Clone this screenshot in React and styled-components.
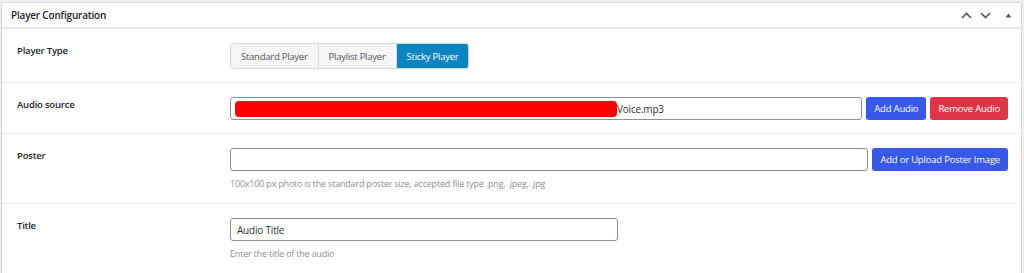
import React from "react";
import styled, { createGlobalStyle } from "styled-components";

const GlobalStyle = createGlobalStyle`
  body {
    margin: 0;
    background: #f0f0f1;
    font-family: "Open Sans", "Noto Sans", sans-serif;
    color: #1d2327;
  }
`;

const App = () => {
  return (
    <>
      <GlobalStyle />
      <Page>
        <Panel>
          <Header>
            <HeaderTitle>Player Configuration</HeaderTitle>
            <HeaderActions>
              <IconButton aria-label="Move up">
                <svg width="11" height="7" viewBox="0 0 11 7">
                  <path d="M1 6 L5.5 1.5 L10 6" fill="none" stroke="#50575e" strokeWidth="1.6" />
                </svg>
              </IconButton>
              <IconButton aria-label="Move down">
                <svg width="11" height="7" viewBox="0 0 11 7">
                  <path d="M1 1 L5.5 5.5 L10 1" fill="none" stroke="#50575e" strokeWidth="1.6" />
                </svg>
              </IconButton>
              <IconButton aria-label="Toggle panel" $gap="6px">
                <svg width="7" height="5" viewBox="0 0 7 5">
                  <path d="M0.5 4.5 L3.5 0.5 L6.5 4.5 Z" fill="#50575e" />
                </svg>
              </IconButton>
            </HeaderActions>
          </Header>

          <Row>
            <Label>Player Type</Label>
            <Field>
              <Segmented>
                <Segment>Standard Player</Segment>
                <Segment>Playlist Player</Segment>
                <Segment $active>Sticky Player</Segment>
              </Segmented>
            </Field>
          </Row>

          <Row>
            <Label>Audio source</Label>
            <Field>
              <InputLine>
                <FakeInput>
                  <Redacted />
                  <span>Voice.mp3</span>
                </FakeInput>
                <ActionButton $color="#3858e9">Add Audio</ActionButton>
                <ActionButton $color="#dc3545">Remove Audio</ActionButton>
              </InputLine>
            </Field>
          </Row>

          <Row>
            <Label>Poster</Label>
            <Field>
              <InputLine>
                <TextInput type="text" defaultValue="" />
                <ActionButton $color="#3858e9">Add or Upload Poster Image</ActionButton>
              </InputLine>
              <Help>100x100 px photo is the standard poster size, accepted file type .png, .jpeg, .jpg</Help>
            </Field>
          </Row>

          <Row $last>
            <Label>Title</Label>
            <Field>
              <TextInput type="text" defaultValue="Audio Title" $width="388px" />
              <Help>Enter the title of the audio</Help>
            </Field>
          </Row>
        </Panel>
      </Page>
    </>
  );
};

const Page = styled.div`
  padding: 2px 2px 0 1px;
  height: 271px;
  overflow: hidden;
`;

const Panel = styled.div`
  background: #fff;
  border: 1px solid #d6d7d9;
  border-bottom: none;
  height: 100%;
  letter-spacing: -0.2px;
`;

const Header = styled.div`
  display: flex;
  align-items: center;
  justify-content: space-between;
  height: 24px;
  padding: 0 9px 0 9px;
  border-bottom: 2px solid #e6e6e6;
`;

const HeaderTitle = styled.h2`
  margin: 0;
  font-size: 10px;
  font-weight: 600;
  color: #1d2327;
`;

const HeaderActions = styled.div`
  display: flex;
  align-items: center;
  gap: 8px;
`;

const IconButton = styled.button`
  display: flex;
  align-items: center;
  justify-content: center;
  padding: 0;
  border: none;
  background: none;
  margin-left: ${(p) => p.$gap || "0"};
`;

const Row = styled.div`
  display: flex;
  align-items: flex-start;
  padding: 14px 13px ${(p) => (p.$last ? "20px" : "13px")} 15px;
  border-bottom: ${(p) => (p.$last ? "none" : "1px solid #ededed")};
`;

const Label = styled.div`
  width: 213px;
  flex-shrink: 0;
  padding-top: 1px;
  font-size: 9.5px;
  font-weight: 600;
  color: #1d2327;
`;

const Field = styled.div`
  flex: 1;
  display: flex;
  flex-direction: column;
  align-items: flex-start;
`;

const Segmented = styled.div`
  display: flex;
  border: 1px solid #d4d4d4;
  border-radius: 3px;
  overflow: hidden;
  height: 24px;
`;

const Segment = styled.button`
  height: 100%;
  padding: 0 10px;
  border: none;
  border-left: 1px solid #dcdcdc;
  font-family: inherit;
  font-size: 9.5px;
  letter-spacing: -0.25px;
  background: ${(p) => (p.$active ? "#0b85bf" : "#f5f5f5")};
  color: ${(p) => (p.$active ? "#fff" : "#50575e")};
  &:first-child {
    border-left: none;
  }
`;

const InputLine = styled.div`
  display: flex;
  align-items: center;
  gap: 4px;
  width: 100%;
`;

const FakeInput = styled.div`
  flex: 1;
  display: flex;
  align-items: center;
  height: 23px;
  box-sizing: border-box;
  padding: 0 4px;
  border: 1px solid #8c8f94;
  border-radius: 3px;
  font-size: 10px;
  color: #2c3338;
`;

const Redacted = styled.span`
  width: 382px;
  height: 16px;
  background: #ff0000;
  border-radius: 4px;
`;

const TextInput = styled.input`
  flex: ${(p) => (p.$width ? "none" : "1")};
  width: ${(p) => p.$width || "auto"};
  min-width: 0;
  height: 23px;
  box-sizing: border-box;
  padding: 0 6px;
  border: 1px solid #8c8f94;
  border-radius: 3px;
  font-family: inherit;
  font-size: 10px;
  letter-spacing: -0.2px;
  color: #2c3338;
  outline: none;
`;

const ActionButton = styled.button`
  flex-shrink: 0;
  height: 23px;
  padding: 0 8px;
  border: none;
  border-radius: 3px;
  background: ${(p) => p.$color};
  color: #fff;
  font-family: inherit;
  font-size: 9.5px;
  letter-spacing: -0.2px;
`;

const Help = styled.p`
  margin: 6px 0 0;
  font-size: 9px;
  color: #8c8f94;
`;

export default App;
